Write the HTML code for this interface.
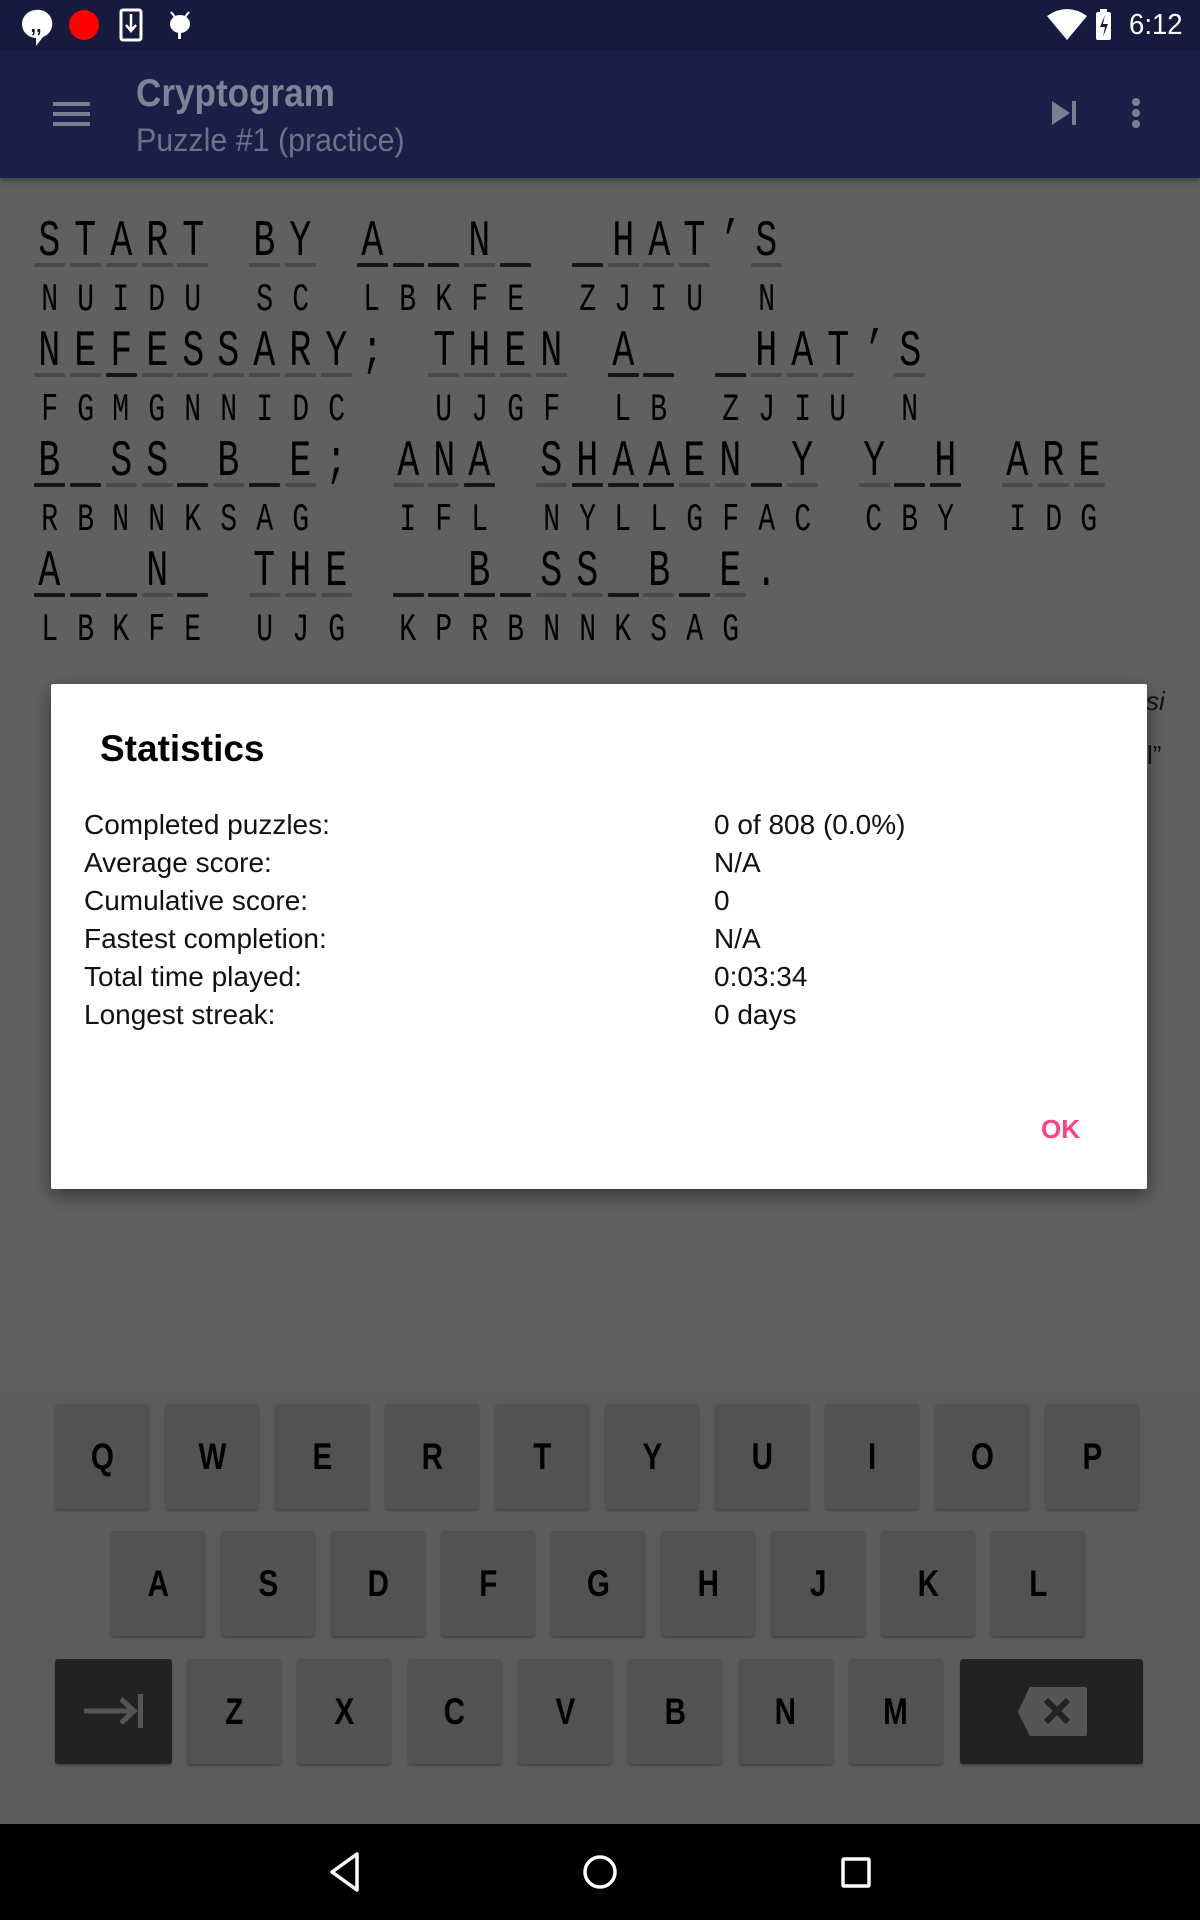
<!DOCTYPE html>
<html><head><meta charset="utf-8">
<style>
*{margin:0;padding:0;box-sizing:border-box}
body{width:1200px;height:1920px;position:relative;overflow:hidden;background:#606060;font-family:"Liberation Sans",sans-serif}
.abs{position:absolute}
#sb{left:0;top:0;width:1200px;height:50px;background:#151a3e}
#ab{left:0;top:50px;width:1200px;height:128px;background:#1a1f48;box-shadow:0 3px 5px rgba(0,0,0,.35)}
.cell{position:absolute;width:36px;text-align:center}
.cell span{display:inline-block;transform:scaleX(.72)}
.pl{font-family:"Liberation Mono",monospace;font-size:51px;line-height:52px;color:#000}
.cp{font-family:"Liberation Mono",monospace;font-size:39px;line-height:39px;color:#000}
.ul{position:absolute;width:31px;height:4px;border-radius:1px}
#dlg{left:51px;top:684px;width:1096px;height:505px;background:#fff;box-shadow:0 6px 18px rgba(0,0,0,.45);border-radius:2px}
.lab,.val{position:absolute;font-size:28px;color:#111;line-height:30px}
#kb{left:0;top:1391px;width:1200px;height:433px;background:#5c5c5c}
.key{position:absolute;width:94px;height:105px;background:#525252;border-radius:3px;box-shadow:0 2px 2px rgba(0,0,0,.25);text-align:center;line-height:105px;font-size:37px;font-weight:bold;color:#000}
.key span{display:inline-block;transform:scaleX(.8)}
.dk{background:#222}
#nav{left:0;top:1824px;width:1200px;height:96px;background:#000}
</style></head><body>
<div id="sb" class="abs">
 <svg class="abs" style="left:0;top:0" width="200" height="50" viewBox="0 0 200 50">
  <path d="M36 10a14 14 0 1 0 0 28v8l7-9a14 14 0 0 0-7-27z" fill="#fff"/>
  <text x="36" y="32" font-size="20" font-family="Liberation Sans" font-weight="bold" text-anchor="middle" fill="#151a3e">,,</text>
  <ellipse cx="84" cy="25" rx="15" ry="15" fill="#f00"/>
  <rect x="121" y="10" width="20" height="30" rx="2" fill="none" stroke="#fff" stroke-width="3"/>
  <path d="M131 14v16M126 25l5 6 5-6" stroke="#fff" stroke-width="2.5" fill="none"/>
  <path d="M171 12l4 5M189 12l-4 5" stroke="#fff" stroke-width="2"/>
  <ellipse cx="180" cy="24" rx="10" ry="9" fill="#fff"/>
  <rect x="178" y="30" width="3" height="9" fill="#fff"/>
 </svg>
 <svg class="abs" style="left:1040px;top:0" width="160" height="50" viewBox="0 0 160 50">
  <path d="M7 16q20-14 40 0l-20 24z" fill="#fff"/>
  <rect x="56" y="12" width="15" height="28" rx="2" fill="#fff"/><rect x="60" y="9" width="7" height="4" fill="#fff"/>
  <path d="M65 15l-5 12h5l-2 10 5-13h-5z" fill="#151a3e"/>
 </svg>
 <div class="abs" style="left:1129px;top:9px;font-size:29px;color:#fff;transform:scaleX(.95);transform-origin:left">6:12</div>
</div>
<div id="ab" class="abs">
 <div class="abs" style="left:53px;top:52px;width:37px;height:4px;background:#7b7e90"></div>
 <div class="abs" style="left:53px;top:62px;width:37px;height:4px;background:#7b7e90"></div>
 <div class="abs" style="left:53px;top:72px;width:37px;height:4px;background:#7b7e90"></div>
 <div class="abs" style="left:136px;top:22px;font-size:39px;font-weight:bold;color:#808394;transform:scaleX(.9);transform-origin:left">Cryptogram</div>
 <div class="abs" style="left:136px;top:72px;font-size:32px;color:#6e7188;transform:scaleX(.95);transform-origin:left">Puzzle #1 (practice)</div>
 <svg class="abs" style="left:1048px;top:48px" width="110" height="40" viewBox="0 0 110 40">
  <path d="M4 3l18 12L4 27z" fill="#7b7e90"/><rect x="24" y="3" width="4" height="24" fill="#7b7e90"/>
  <circle cx="88" cy="4" r="4" fill="#7b7e90"/><circle cx="88" cy="15" r="4" fill="#7b7e90"/><circle cx="88" cy="26" r="4" fill="#7b7e90"/>
 </svg>
</div>
<div id="puz"></div>
<div class="abs" style="left:1146px;top:686px;font-size:26px;font-style:italic;color:#111">si</div>
<div class="abs" style="left:1147px;top:740px;font-size:26px;color:#111">l”</div>
<div id="dlg" class="abs">
 <div class="abs" style="left:49px;top:44px;font-size:37px;font-weight:bold;color:#000">Statistics</div>
 <div class="lab" style="left:33px;top:126px">Completed puzzles:</div><div class="val" style="left:663px;top:126px">0 of 808 (0.0%)</div>
 <div class="lab" style="left:33px;top:164px">Average score:</div><div class="val" style="left:663px;top:164px">N/A</div>
 <div class="lab" style="left:33px;top:202px">Cumulative score:</div><div class="val" style="left:663px;top:202px">0</div>
 <div class="lab" style="left:33px;top:240px">Fastest completion:</div><div class="val" style="left:663px;top:240px">N/A</div>
 <div class="lab" style="left:33px;top:278px">Total time played:</div><div class="val" style="left:663px;top:278px">0:03:34</div>
 <div class="lab" style="left:33px;top:316px">Longest streak:</div><div class="val" style="left:663px;top:316px">0 days</div>
 <div class="abs" style="left:990px;top:430px;font-size:26px;font-weight:bold;color:#ff4081">OK</div>
</div>
<div id="kb" class="abs"></div>
<div id="keys"></div>
<div id="nav" class="abs">
 <svg class="abs" style="left:0;top:0" width="1200" height="96" viewBox="0 0 1200 96">
  <path d="M357 30L332 48L357 66Z" fill="none" stroke="#fff" stroke-width="3.5" stroke-linejoin="round"/>
  <circle cx="600" cy="48" r="15" fill="none" stroke="#fff" stroke-width="3.5"/>
  <rect x="843" y="35" width="26" height="27" rx="1" fill="none" stroke="#fff" stroke-width="3.5"/>
 </svg>
</div>
<script>
var lines=[
["START BY A__N_ _HAT’S","NUIDU SC LBKFE ZJIU N","ggggg gg dddgd dggg g"],
["NEFESSARY; THEN A_ _HAT’S","FGMGNNIDC  UJGF LB ZJIU N","ggdgggggg  gggg dd dggg g"],
["B_SS_B_E; ANA SHAAEN_Y Y_H ARE","RBNNKSAG  IFL NYLLGFAC CBY IDG","ddggdgdg  ggd gdddggdg gdd ggg"],
["A__N_ THE __B_SS_B_E.","LBKFE UJG KPRBNNKSAG ","dddgd ggg ddddggdgdg "]];
var h="";
lines.forEach(function(l,r){
 var top=220+r*110;
 for(var i=0;i<l[0].length;i++){
  var x=34+i*35.85,c=l[0][i];if(c=="_")c="";
  h+='<div class="cell pl" style="left:'+(x-2.5)+'px;top:'+(top-3)+'px"><span>'+c+'</span></div>';
  var m=l[2][i];
  if(m=="g"||m=="d")h+='<div class="ul" style="left:'+x+'px;top:'+(top+43)+'px;background:'+(m=="d"?"#151515":"#4a4a4a")+'"></div>';
  var k=l[1][i]||"";if(k!=" ")h+='<div class="cell cp" style="left:'+(x-2.5)+'px;top:'+(top+61)+'px"><span>'+k+'</span></div>';
 }
});
document.getElementById("puz").innerHTML=h;
var k="";
"QWERTYUIOP".split("").forEach(function(c,i){k+='<div class="key" style="left:'+(55+i*110)+'px;top:1404px"><span>'+c+'</span></div>'});
"ASDFGHJKL".split("").forEach(function(c,i){k+='<div class="key" style="left:'+(111+i*110)+'px;top:1531px"><span>'+c+'</span></div>'});
"ZXCVBNM".split("").forEach(function(c,i){k+='<div class="key" style="left:'+(187+i*110.3)+'px;top:1659px"><span>'+c+'</span></div>'});
k+='<div class="key dk" style="left:55px;top:1659px;width:117px"><svg width="117" height="105" viewBox="0 0 117 105"><path d="M29 52h50M66 40l13 12-13 12" stroke="#555" stroke-width="5" fill="none"/><rect x="83" y="35" width="5" height="34" fill="#555"/></svg></div>';
k+='<div class="key dk" style="left:960px;top:1659px;width:183px"><svg width="183" height="105" viewBox="0 0 183 105"><path d="M71 30h54v45h-54l-11-22z" fill="#555" stroke="#555" stroke-width="4" stroke-linejoin="round"/><path d="M86 41l22 22M108 41l-22 22" stroke="#222" stroke-width="6"/></svg></div>';
document.getElementById("keys").innerHTML=k;
</script>
</body></html>
